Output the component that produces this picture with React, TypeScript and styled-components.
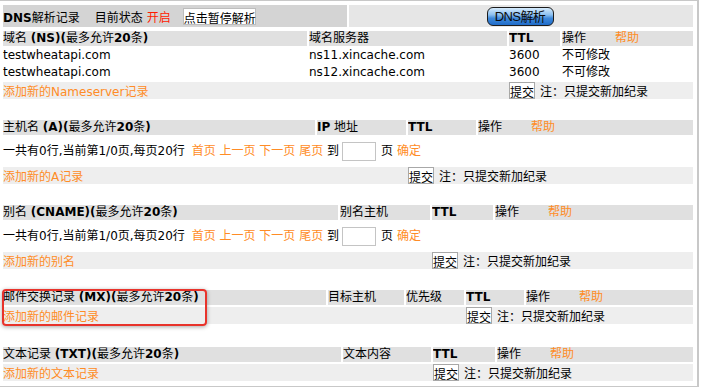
import styled, { createGlobalStyle } from 'styled-components';

const GlobalStyle = createGlobalStyle`
    body {
        margin: 0;
        background: #ffffff;
        color: #000000;
        font-family: "DejaVu Sans", Verdana, "Noto Sans CJK SC", sans-serif;
        font-size: 12px;
    }
`;

type SectionDef = {
    cols: string;
    heads: React.ReactNode[];
    pager?: boolean;
    addText: string;
    top: number;
    highlight?: boolean;
};

const B = styled.b`
    font-weight: 700;
`;

const Help = styled.span`
    color: #ff8c26;
    margin-left: 29px;
`;

const ops = (
    <>
        操作<Help>帮助</Help>
    </>
);

const sections: SectionDef[] = [
    {
        cols: '312px 89px 68px 1fr',
        heads: [
            <>
                主机名 <B>(A)(</B>最多允许<B>20</B>条<B>)</B>
            </>,
            <>
                <B>IP</B> 地址
            </>,
            <B>TTL</B>,
            ops,
        ],
        pager: true,
        addText: '添加新的A记录',
        top: 21,
    },
    {
        cols: '335px 90px 61px 1fr',
        heads: [
            <>
                别名 <B>(CNAME)(</B>最多允许<B>20</B>条<B>)</B>
            </>,
            '别名主机',
            <B>TTL</B>,
            ops,
        ],
        pager: true,
        addText: '添加新的别名',
        top: 21,
    },
    {
        cols: '323px 76px 58px 58px 1fr',
        heads: [
            <>
                邮件交换记录 <B>(MX)(</B>最多允许<B>20</B>条<B>)</B>
            </>,
            '目标主机',
            '优先级',
            <B>TTL</B>,
            ops,
        ],
        addText: '添加新的邮件记录',
        top: 21,
        highlight: true,
    },
    {
        cols: '338px 88px 62px 1fr',
        heads: [
            <>
                文本记录 <B>(TXT)(</B>最多允许<B>20</B>条<B>)</B>
            </>,
            '文本内容',
            <B>TTL</B>,
            ops,
        ],
        addText: '添加新的文本记录',
        top: 23,
    },
];

const nsRows = [
    ['testwheatapi.com', 'ns11.xincache.com', '3600', '不可修改'],
    ['testwheatapi.com', 'ns12.xincache.com', '3600', '不可修改'],
];

const App = () => {
    return (
        <>
            <GlobalStyle />
            <Frame>
                <TitleBar>
                    <StatusCell>
                        <span>
                            <B>DNS</B>解析记录
                        </span>
                        <Label>目前状态</Label>
                        <On>开启</On>
                        <PauseButton>点击暂停解析</PauseButton>
                    </StatusCell>
                    <ActionCell>
                        <DnsButton>DNS解析</DnsButton>
                    </ActionCell>
                </TitleBar>

                <Section $cols="304px 198px 51px 1fr" $top={4}>
                    <HeadCell>
                        域名 <B>(NS)(</B>最多允许<B>20</B>条<B>)</B>
                    </HeadCell>
                    <HeadCell>域名服务器</HeadCell>
                    <HeadCell>
                        <B>TTL</B>
                    </HeadCell>
                    <HeadCell>{ops}</HeadCell>
                    {nsRows.map((row, i) =>
                        row.map((v, j) => <DataCell key={`${i}-${j}`}>{v}</DataCell>),
                    )}
                    <AddRow>
                        <AddLink $end={3}>添加新的Nameserver记录</AddLink>
                        <SubmitCell $start={3}>
                            <SubmitButton>提交</SubmitButton>
                            <Note>注：只提交新加纪录</Note>
                        </SubmitCell>
                    </AddRow>
                </Section>

                {sections.map((s, i) => {
                    const ttlCol = s.heads.length - 1;
                    return (
                        <Section key={i} $cols={s.cols} $top={s.top}>
                            {s.heads.map((h, j) => (
                                <HeadCell key={j}>{h}</HeadCell>
                            ))}
                            {s.pager && (
                                <Pager>
                                    一共有0行,当前第1/0页,每页20行 <Link $lead>首页</Link>{' '}
                                    <Link>上一页</Link> <Link>下一页</Link> <Link>尾页</Link> 到
                                    <PageInput type="text" />页 <Link>确定</Link>
                                </Pager>
                            )}
                            <AddRow>
                                <AddLink $end={ttlCol}>{s.addText}</AddLink>
                                <SubmitCell $start={ttlCol}>
                                    <SubmitButton>提交</SubmitButton>
                                    <Note>注：只提交新加纪录</Note>
                                </SubmitCell>
                            </AddRow>
                            {s.highlight && <Highlight />}
                        </Section>
                    );
                })}
            </Frame>
        </>
    );
};

const Frame = styled.div`
    width: 690px;
    padding: 4px 4px 5px 3px;
    border-top: 1px solid #c8c8c8;
    border-right: 2px solid #c8c8c8;
    border-bottom: 1px solid #c8c8c8;
`;

const TitleBar = styled.div`
    display: grid;
    grid-template-columns: 344px 1fr;
    gap: 2px;
    height: 22px;
`;

const StatusCell = styled.div`
    background: #d4d4d4;
    display: flex;
    align-items: center;
    white-space: nowrap;
`;

const Label = styled.span`
    margin-left: 15px;
`;

const On = styled.span`
    color: #ff1a00;
    margin-left: 4px;
`;

const PauseButton = styled.button`
    margin-left: 12px;
    height: 17px;
    padding: 0;
    width: 73px;
    background: #ffffff;
    border: 1px solid #bdbdbd;
    font: inherit;
    color: #000;
`;

const ActionCell = styled.div`
    background: #e6e6e6;
    display: flex;
    align-items: center;
    justify-content: center;
`;

const DnsButton = styled.button`
    width: 67px;
    height: 19px;
    padding: 0;
    margin-right: 2px;
    border: 1px solid #1c1c1c;
    border-radius: 6px;
    background: linear-gradient(#d6ebfc 0%, #8cc0f0 40%, #3f89da 60%, #1f6cc9 100%);
    color: #0b0b0b;
    font-family: "Liberation Sans", "Noto Sans CJK SC", sans-serif;
    font-size: 13px;
    letter-spacing: -0.6px;
    line-height: 17px;
`;

const Section = styled.div<{ $cols: string; $top: number }>`
    position: relative;
    display: grid;
    grid-template-columns: ${(p) => p.$cols};
    gap: 2px;
    margin-top: ${(p) => p.$top}px;
`;

const HeadCell = styled.div`
    background: #e0e0e0;
    height: 15px;
    line-height: 15px;
    white-space: nowrap;
    overflow: hidden;
`;

const DataCell = styled.div`
    height: 15px;
    line-height: 15px;
    white-space: nowrap;
`;

const Pager = styled.div`
    grid-column: 1 / -1;
    height: 28px;
    line-height: 28px;
    white-space: nowrap;
`;

const Link = styled.span<{ $lead?: boolean }>`
    color: #ff8c26;
    margin-left: ${(p) => (p.$lead ? '3px' : '0')};
`;

const PageInput = styled.input`
    box-sizing: border-box;
    width: 34px;
    height: 19px;
    margin: 0 5px 0 3px;
    padding: 0;
    vertical-align: middle;
    border: 1px solid #c4c4c4;
    background: #ffffff;
`;

const AddRow = styled.div`
    grid-column: 1 / -1;
    display: grid;
    grid-template-columns: subgrid;
    align-items: center;
    height: 17px;
    background: #eeeeee;
`;

const AddLink = styled.div<{ $end: number }>`
    grid-column: 1 / ${(p) => p.$end};
    color: #ff8c26;
    white-space: nowrap;
`;

const SubmitCell = styled.div<{ $start: number }>`
    grid-column: ${(p) => p.$start} / -1;
    display: flex;
    align-items: center;
    white-space: nowrap;
`;

const SubmitButton = styled.button`
    box-sizing: border-box;
    width: 26px;
    height: 17px;
    padding: 0;
    background: #ffffff;
    border: 1px solid #a8a8a8;
    font: inherit;
    color: #000;
`;

const Note = styled.span`
    margin-left: 5px;
`;

const Highlight = styled.div`
    position: absolute;
    left: -1px;
    top: -1px;
    width: 205px;
    height: 37px;
    box-sizing: border-box;
    border: 2px solid #e8332b;
    border-radius: 4px;
    box-shadow: 0 1px 4px rgba(0, 0, 0, 0.35);
    pointer-events: none;
`;

export default App;
